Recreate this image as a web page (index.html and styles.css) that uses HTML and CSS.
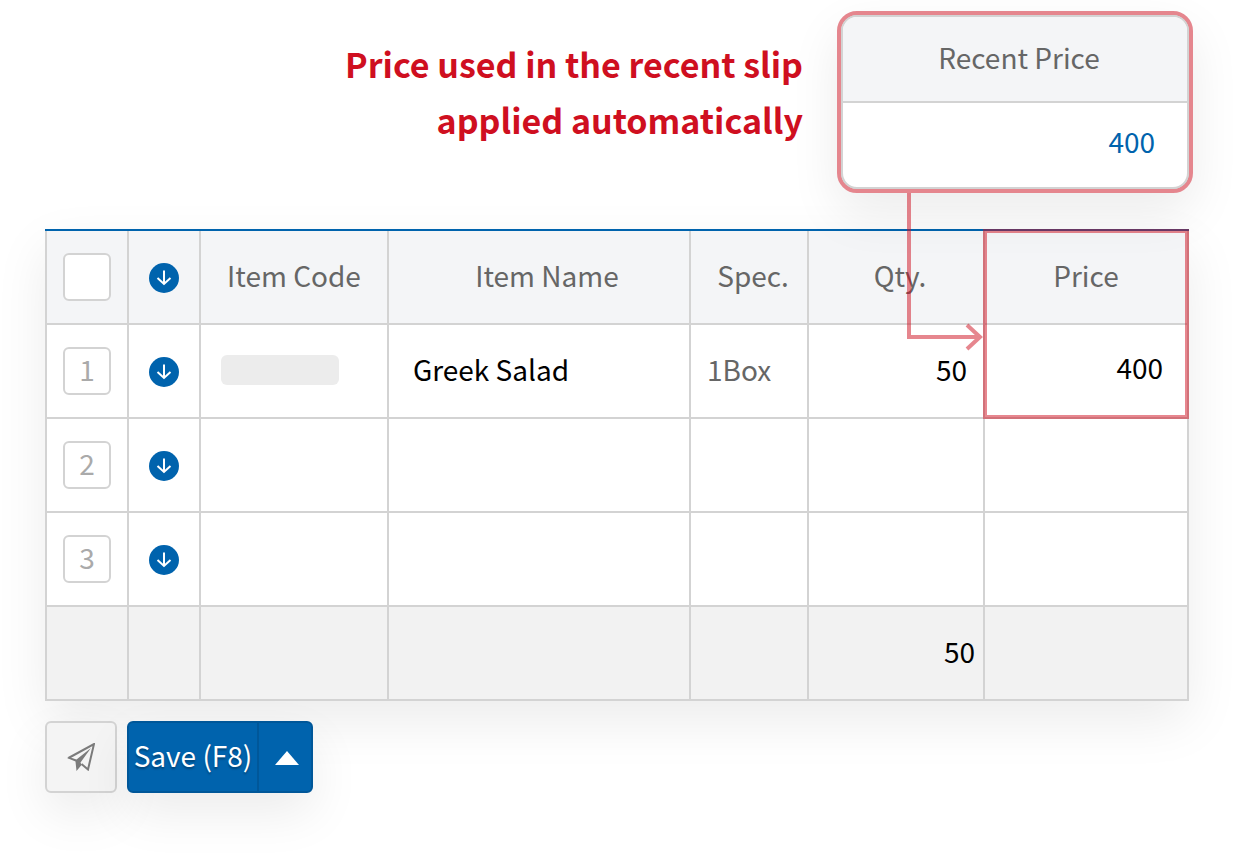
FILE: index.html
```html
<!DOCTYPE html>
<html lang="en">
<head>
    <meta charset="UTF-8">
    <meta name="viewport" content="width=device-width, initial-scale=1">
    <title>Recent Price</title>
    <link rel="stylesheet" href="styles.css">
</head>
<body>
    <svg class="sprite" aria-hidden="true">
        <symbol id="arrow-down" viewBox="0 0 30 30">
            <path d="M15 7.500v13M8.500 15l6.500 6 6.500-6" fill="none" stroke="#fff" stroke-width="2"/>
        </symbol>
    </svg>

    <header class="top">
        <h1 class="headline">Price used in the recent slip<br>applied automatically</h1>
        <div class="recent">
            <table class="recent-table">
                <thead>
                    <tr><th>Recent Price</th></tr>
                </thead>
                <tbody>
                    <tr><td>400</td></tr>
                </tbody>
            </table>
        </div>
    </header>

    <main>
        <table class="slip">
            <colgroup>
                <col class="col-no">
                <col class="col-add">
                <col class="col-code">
                <col class="col-name">
                <col class="col-spec">
                <col class="col-qty">
                <col class="col-price">
            </colgroup>
            <thead>
                <tr>
                    <th class="tool"><input type="checkbox" class="box" aria-label="Select all"></th>
                    <th class="tool"><button type="button" class="add" aria-label="Insert line"><svg><use href="#arrow-down"/></svg></button></th>
                    <th>Item Code</th>
                    <th class="name-head">Item Name</th>
                    <th class="spec-head">Spec.</th>
                    <th class="qty-head">Qty.</th>
                    <th class="price-head">
                        Price
                        <div class="mark"></div>
                        <!-- line from the recent price to the price cell -->
                        <svg class="connector" viewBox="0 0 76 158" aria-hidden="true">
                            <path d="M2 0V144H74M60 132L73 144L60 156" fill="none" stroke="#cf0f20" stroke-width="4"/>
                        </svg>
                    </th>
                </tr>
            </thead>
            <tbody>
                <tr>
                    <td class="tool"><button type="button" class="box">1</button></td>
                    <td class="tool"><button type="button" class="add" aria-label="Insert line"><svg><use href="#arrow-down"/></svg></button></td>
                    <td class="code"><div class="blank"></div></td>
                    <td class="name">Greek Salad</td>
                    <td class="spec">1Box</td>
                    <td class="qty">50</td>
                    <td class="price">400</td>
                </tr>
                <tr>
                    <td class="tool"><button type="button" class="box">2</button></td>
                    <td class="tool"><button type="button" class="add" aria-label="Insert line"><svg><use href="#arrow-down"/></svg></button></td>
                    <td></td>
                    <td></td>
                    <td></td>
                    <td></td>
                    <td></td>
                </tr>
                <tr>
                    <td class="tool"><button type="button" class="box">3</button></td>
                    <td class="tool"><button type="button" class="add" aria-label="Insert line"><svg><use href="#arrow-down"/></svg></button></td>
                    <td></td>
                    <td></td>
                    <td></td>
                    <td></td>
                    <td></td>
                </tr>
            </tbody>
            <tfoot>
                <tr>
                    <td></td>
                    <td></td>
                    <td></td>
                    <td></td>
                    <td></td>
                    <td class="total">50</td>
                    <td></td>
                </tr>
            </tfoot>
        </table>

        <div class="actions">
            <button type="button" class="send" aria-label="Send">
                <svg viewBox="0 0 28 28">
                    <path d="M1.500 15L27 1 21 26.500 14.500 21" fill="none" stroke="#7b7b7b" stroke-width="2"/>
                    <path d="M0 15L2 14 9.500 16.500 24 5 13.500 19.500 14.500 22 9.500 28 8.500 18.500Z" fill="#7b7b7b"/>
                </svg>
            </button>
            <div class="save-group">
                <button type="button" class="save">Save (F8)</button>
                <button type="button" class="more" aria-label="More save options">
                    <svg viewBox="0 0 24 14"><path d="M12 0L24 14H0Z" fill="#fff"/></svg>
                </button>
            </div>
        </div>
    </main>
</body>
</html>
```
FILE: styles.css
```css
*{
    box-sizing: border-box;
    padding: 0;
    margin: 0;
}

body{
    padding: 11px 45px 75px;
    background-color: #fff;
    color: #000;
    font-family: "Noto Sans CJK KR", "Noto Sans", sans-serif;
    font-size: 28px;
    line-height: 40px;
}

button{
    font: inherit;
    cursor: pointer;
}

svg{
    display: block;
}

table{
    width: 100%;
    border-spacing: 0;
    table-layout: fixed;
}

th{
    font-weight: 400;
    color: #666;
    background-color: #f4f5f7;
}

.sprite{
    display: none;
}

/* headline and recent price */
.top{
    display: flex;
    justify-content: flex-end;
    gap: 34px;
    margin-right: -4px;
}

.headline{
    padding-top: 25px;
    color: #cf0f20;
    font-size: 34px;
    line-height: 56px;
    font-weight: 700;
    text-align: right;
}

.recent{
    position: relative;
    z-index: 1;
    width: 356px;
    border: 4px solid #e5868e;
    border-radius: 20px;
    background-color: #d3d3d3;
    box-shadow: 0 20px 50px rgba(0,0,0,.08);
}

.recent-table{
    overflow: hidden;
    border: 2px solid #d3d3d3;
    border-radius: 16px;
    background-color: #fff;
}

.recent-table th{
    height: 86px;
    padding: 0 0 4px 8px;
    border-bottom: 2px solid #d3d3d3;
}

.recent-table td{
    height: 84px;
    padding: 0 32px 8px 0;
    color: #0063ad;
    text-align: right;
}

/* slip lines */
.slip{
    margin-top: 36px;
    border-top: 2px solid #0063ad;
    background-color: #fff;
    box-shadow: 0 20px 50px rgba(0,0,0,.08);
}

.col-no{
    width: 84px;
}

.col-add{
    width: 72px;
}

.col-code{
    width: 188px;
}

.col-spec{
    width: 118px;
}

.col-qty{
    width: 176px;
}

.col-price{
    width: 204px;
}

.slip th,
.slip td{
    height: 94px;
    padding-bottom: 4px;
    border-right: 2px solid #d3d3d3;
    border-bottom: 2px solid #d3d3d3;
}

.slip th:first-child,
.slip td:first-child{
    border-left: 2px solid #d3d3d3;
}

.slip .tool{
    padding-bottom: 0;
}

.slip tfoot td{
    background-color: #f2f2f2;
}

.box{
    display: block;
    appearance: none;
    width: 48px;
    height: 48px;
    margin: 0 auto;
    padding-bottom: 4px;
    border: 2px solid #d3d3d3;
    border-radius: 6px;
    background-color: #fff;
    color: #aaa;
}

.add{
    display: block;
    width: 30px;
    height: 30px;
    margin: 2px auto 0;
    border: 0;
    border-radius: 50%;
    background-color: #0063ad;
}

.add svg{
    width: 30px;
    height: 30px;
}

.blank{
    width: 118px;
    height: 30px;
    border-radius: 6px;
    background-color: #ececec;
}

.slip .code{
    padding: 0 0 2px 20px;
}

.slip .name-head{
    padding-left: 16px;
}

.slip .name{
    padding-left: 24px;
}

.slip .spec{
    padding-left: 16px;
    color: #666;
}

.slip .spec-head,
.slip .qty-head{
    padding-left: 8px;
}

.slip .qty{
    padding-right: 16px;
    text-align: right;
}

.slip .price{
    padding: 0 24px 8px 0;
    text-align: right;
}

.slip .total{
    padding-right: 8px;
    text-align: right;
}

.price-head{
    position: relative;
}

.mark{
    position: absolute;
    z-index: 2;
    top: -2px;
    left: -2px;
    right: -2px;
    height: 190px;
    border: 4px solid #cf0f20;
    opacity: .5;
}

.connector{
    position: absolute;
    z-index: 2;
    top: -38px;
    right: 100%;
    width: 78px;
    height: 158px;
    padding-right: 2px;
    opacity: .5;
}

/* buttons */
.actions{
    display: flex;
    gap: 10px;
    margin-top: 20px;
}

.send{
    display: flex;
    align-items: center;
    justify-content: center;
    width: 72px;
    height: 72px;
    border: 2px solid #d3d3d3;
    border-radius: 6px;
    background-color: #f4f4f4;
    box-shadow: 0 20px 50px rgba(0,0,0,.08);
}

.send svg{
    width: 28px;
    height: 28px;
}

.save-group{
    display: flex;
    height: 72px;
    border: 2px solid #005799;
    border-radius: 6px;
    background-color: #0063ad;
    box-shadow: 0 20px 50px rgba(0,0,0,.08);
}

.save,
.more{
    border: 0;
    background-color: transparent;
    color: #fff;
}

.save{
    width: 128px;
    padding-bottom: 4px;
    text-shadow: 0 2px 2px rgba(0,0,0,.3);
}

.more{
    display: flex;
    align-items: center;
    justify-content: center;
    width: 54px;
    padding: 2px 0 0 4px;
    border-left: 2px solid #005799;
}

.more svg{
    width: 24px;
    height: 14px;
}
```
